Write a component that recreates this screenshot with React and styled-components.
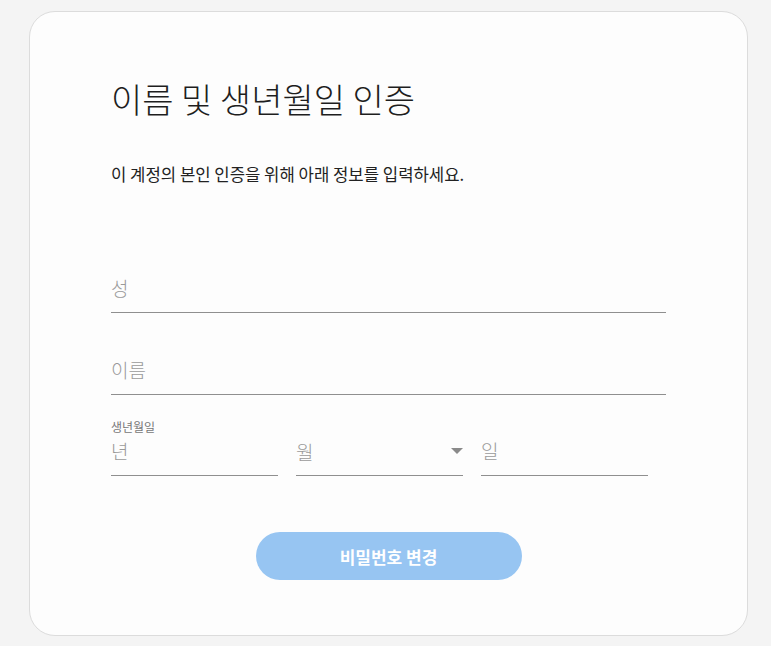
import styled, { createGlobalStyle } from "styled-components";

const GlobalStyle = createGlobalStyle`
  html, body {
    margin: 0;
    padding: 0;
    background: #f4f4f4;
    font-family: "Noto Sans CJK KR", "Noto Sans", sans-serif;
  }
`;

const Page = styled.div`
  padding: 11px 23px 10px 29px;
`;

const Card = styled.div`
  box-sizing: border-box;
  width: 719px;
  height: 625px;
  background: #fdfdfd;
  border: 1px solid #dcdcdc;
  border-radius: 26px;
  padding: 67px 81px 0 81px;
  display: flex;
  flex-direction: column;
`;

const Title = styled.h1`
  margin: 0;
  font-size: 34px;
  font-weight: 300;
  line-height: 40px;
  color: #1e1e1e;
`;

const Subtitle = styled.p`
  margin: 43px 0 0;
  font-size: 16.7px;
  line-height: 24px;
  color: #222;
`;

const Form = styled.form`
  margin-top: 69px;
  display: flex;
  flex-direction: column;
  gap: 24px;
`;

const Field = styled.label`
  display: flex;
  flex-direction: column;
  padding-top: 20px;
`;

const SmallLabel = styled.span`
  position: absolute;
  top: 1px;
  left: 0;
  font-size: 12px;
  line-height: 14px;
  color: #777;
`;

const Input = styled.input`
  box-sizing: border-box;
  width: 100%;
  height: 38px;
  border: none;
  border-bottom: 1px solid #8f8f8f;
  background: transparent;
  padding: 0 0 12px;
  font-family: inherit;
  font-size: 19px;
  font-weight: 300;
  color: #333;
  outline: none;

  &::placeholder {
    color: #9a9a9a;
  }
`;

const Row = styled.div`
  position: relative;
  display: flex;
  gap: 18px;
  padding-top: 19px;
`;

const Column = styled.div`
  position: relative;
  width: 167px;
`;

const Select = styled.select`
  box-sizing: border-box;
  appearance: none;
  width: 100%;
  height: 38px;
  border: none;
  border-bottom: 1px solid #8f8f8f;
  background: transparent;
  padding: 0 0 12px;
  font-family: inherit;
  font-size: 19px;
  font-weight: 300;
  color: #9a9a9a;
  outline: none;
`;

const Arrow = styled.span`
  position: absolute;
  right: 0;
  top: 10px;
  width: 0;
  height: 0;
  border-left: 6px solid transparent;
  border-right: 6px solid transparent;
  border-top: 6px solid #8a8a8a;
  pointer-events: none;
`;

const Actions = styled.div`
  display: flex;
  justify-content: center;
  margin-top: 56px;
`;

const Button = styled.button`
  width: 266px;
  height: 48px;
  border: none;
  border-radius: 24px;
  background: #97c5f2;
  color: #fff;
  font-family: inherit;
  font-size: 17px;
  font-weight: 700;
  cursor: default;
`;

export default function App() {
  return (
    <>
      <GlobalStyle />
      <Page>
        <Card>
          <Title>이름 및 생년월일 인증</Title>
          <Subtitle>이 계정의 본인 인증을 위해 아래 정보를 입력하세요.</Subtitle>
          <Form onSubmit={(e) => e.preventDefault()}>
            <Field>
              <Input placeholder="성" />
            </Field>
            <Field>
              <Input placeholder="이름" />
            </Field>
            <Row>
              <SmallLabel>생년월일</SmallLabel>
              <Column>
                <Input placeholder="년" />
              </Column>
              <Column>
                <Select defaultValue="">
                  <option value="" disabled>
                    월
                  </option>
                </Select>
                <Arrow />
              </Column>
              <Column>
                <Input placeholder="일" />
              </Column>
            </Row>
          </Form>
          <Actions>
            <Button type="button">비밀번호 변경</Button>
          </Actions>
        </Card>
      </Page>
    </>
  );
}
